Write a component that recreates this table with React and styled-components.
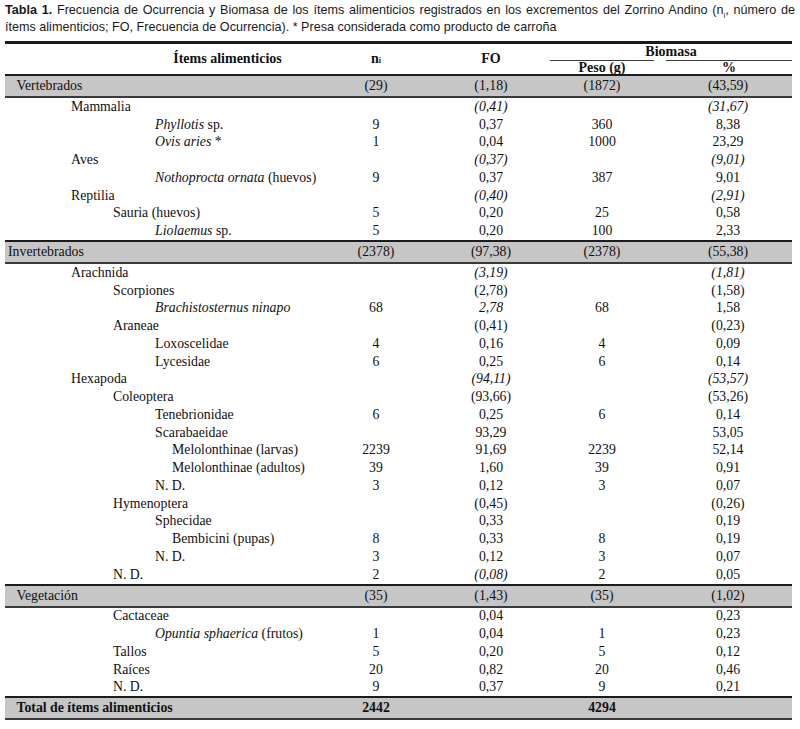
import React from 'react'
import styled, { createGlobalStyle } from 'styled-components'

const GlobalStyle = createGlobalStyle`
  body {
    margin: 0;
    background: #ffffff;
    color: #111111;
    font-family: "Liberation Serif", "Times New Roman", serif;
  }
`

const COLS = '315px 112px 118px 104px 138px'

const Page = styled.div`
  width: 800px;
  padding-left: 5px;
  box-sizing: border-box;
`

const Caption = styled.div`
  width: 790px;
  padding-top: 2px;
  margin-bottom: 5px;
  font-family: "Liberation Sans", Arial, sans-serif;
  font-size: 12.6px;
  line-height: 17px;
  color: #1a1a1a;

  b {
    font-weight: bold;
  }

  sub {
    font-size: 8px;
    line-height: 0;
  }
`

const CaptionLine = styled.div`
  white-space: nowrap;
  text-align: ${p => (p.$justify ? 'justify' : 'left')};
  text-align-last: ${p => (p.$justify ? 'justify' : 'left')};
`

const Table = styled.div`
  width: 787px;
`

const Header = styled.div`
  display: grid;
  grid-template-columns: ${COLS};
  grid-template-rows: 16px 14px;
  border-top: 3px solid #1a1a1a;
  font-weight: bold;
  font-size: 14px;
`

const HeadCell = styled.div`
  grid-row: ${p => p.$row || '1 / 3'};
  grid-column: ${p => p.$col};
  display: flex;
  align-items: center;
  justify-content: center;
  padding-left: ${p => p.$pad || 0}px;
  margin-left: ${p => p.$ml || 0}px;
  border-top: ${p => (p.$rule ? '1px solid #3a3a3a' : 'none')};
  line-height: 1;

  sub {
    font-size: 8px;
    line-height: 0;
    position: relative;
    top: 2px;
  }
`

const Row = styled.div`
  display: grid;
  grid-template-columns: ${COLS};
  align-items: center;
  height: 17.75px;
  font-size: 13.8px;
  line-height: 1;
  font-weight: ${p => (p.$bold ? 'bold' : 'normal')};
`

const Band = styled(Row)`
  height: 24px;
  box-sizing: border-box;
  background: #c6c6c6;
  border-top: 2px solid #1c1c1c;
  border-bottom: 2px solid #3a3a3a;
`

const Name = styled.div`
  padding-left: ${p => p.$indent}px;
  white-space: nowrap;
`

const Num = styled.div`
  text-align: center;
  font-style: ${p => (p.$it ? 'italic' : 'normal')};
  padding-left: ${p => (p.$last ? 10 : 0)}px;
`

const I = styled.i`
  font-style: italic;
`

const LEVEL = [9, 66, 108, 150, 167]

const rows = [
  { band: true, indent: 11.5, name: 'Vertebrados', ni: '(29)', fo: '(1,18)', peso: '(1872)', pct: '(43,59)' },
  { lv: 1, name: 'Mammalia', fo: '(0,41)', foI: true, pct: '(31,67)', pctI: true },
  { lv: 3, name: <><I>Phyllotis</I> sp.</>, ni: '9', fo: '0,37', peso: '360', pct: '8,38' },
  { lv: 3, name: <><I>Ovis aries</I> *</>, ni: '1', fo: '0,04', peso: '1000', pct: '23,29' },
  { lv: 1, name: 'Aves', fo: '(0,37)', foI: true, pct: '(9,01)', pctI: true },
  { lv: 3, name: <><I>Nothoprocta ornata</I> (huevos)</>, ni: '9', fo: '0,37', peso: '387', pct: '9,01' },
  { lv: 1, name: 'Reptilia', fo: '(0,40)', foI: true, pct: '(2,91)', pctI: true },
  { lv: 2, name: 'Sauria (huevos)', ni: '5', fo: '0,20', peso: '25', pct: '0,58' },
  { lv: 3, name: <><I>Liolaemus</I> sp.</>, ni: '5', fo: '0,20', peso: '100', pct: '2,33' },
  { band: true, indent: 3, name: 'Invertebrados', ni: '(2378)', fo: '(97,38)', peso: '(2378)', pct: '(55,38)' },
  { lv: 1, name: 'Arachnida', fo: '(3,19)', foI: true, pct: '(1,81)', pctI: true },
  { lv: 2, name: 'Scorpiones', fo: '(2,78)', pct: '(1,58)' },
  { lv: 3, name: <I>Brachistosternus ninapo</I>, ni: '68', fo: '2,78', foI: true, peso: '68', pct: '1,58' },
  { lv: 2, name: 'Araneae', fo: '(0,41)', pct: '(0,23)' },
  { lv: 3, name: 'Loxoscelidae', ni: '4', fo: '0,16', peso: '4', pct: '0,09' },
  { lv: 3, name: 'Lycesidae', ni: '6', fo: '0,25', peso: '6', pct: '0,14' },
  { lv: 1, name: 'Hexapoda', fo: '(94,11)', foI: true, pct: '(53,57)', pctI: true },
  { lv: 2, name: 'Coleoptera', fo: '(93,66)', pct: '(53,26)' },
  { lv: 3, name: 'Tenebrionidae', ni: '6', fo: '0,25', peso: '6', pct: '0,14' },
  { lv: 3, name: 'Scarabaeidae', fo: '93,29', pct: '53,05' },
  { lv: 4, name: 'Melolonthinae (larvas)', ni: '2239', fo: '91,69', peso: '2239', pct: '52,14' },
  { lv: 4, name: 'Melolonthinae (adultos)', ni: '39', fo: '1,60', peso: '39', pct: '0,91' },
  { lv: 3, name: 'N. D.', ni: '3', fo: '0,12', peso: '3', pct: '0,07' },
  { lv: 2, name: 'Hymenoptera', fo: '(0,45)', pct: '(0,26)' },
  { lv: 3, name: 'Sphecidae', fo: '0,33', pct: '0,19' },
  { lv: 4, name: 'Bembicini (pupas)', ni: '8', fo: '0,33', peso: '8', pct: '0,19' },
  { lv: 3, name: 'N. D.', ni: '3', fo: '0,12', peso: '3', pct: '0,07' },
  { lv: 2, name: 'N. D.', ni: '2', fo: '(0,08)', foI: true, peso: '2', pct: '0,05' },
  { band: true, indent: 11.5, name: 'Vegetación', ni: '(35)', fo: '(1,43)', peso: '(35)', pct: '(1,02)' },
  { lv: 2, name: 'Cactaceae', fo: '0,04', pct: '0,23' },
  { lv: 3, name: <><I>Opuntia sphaerica</I> (frutos)</>, ni: '1', fo: '0,04', peso: '1', pct: '0,23' },
  { lv: 2, name: 'Tallos', ni: '5', fo: '0,20', peso: '5', pct: '0,12' },
  { lv: 2, name: 'Raíces', ni: '20', fo: '0,82', peso: '20', pct: '0,46' },
  { lv: 2, name: 'N. D.', ni: '9', fo: '0,37', peso: '9', pct: '0,21' },
  { band: true, bold: true, indent: 11.5, name: 'Total de ítems alimenticios', ni: '2442', peso: '4294' },
]

const DataRow = ({ r }) => {
  const Wrap = r.band ? Band : Row
  const indent = r.band ? r.indent : LEVEL[r.lv]
  return (
    <Wrap $bold={r.bold}>
      <Name $indent={indent}>{r.name}</Name>
      <Num>{r.ni}</Num>
      <Num $it={r.foI}>{r.fo}</Num>
      <Num>{r.peso}</Num>
      <Num $it={r.pctI} $last>{r.pct}</Num>
    </Wrap>
  )
}

export default function App() {
  return (
    <Page>
      <GlobalStyle />
      <Caption>
        <CaptionLine $justify>
          <b>Tabla 1.</b> Frecuencia de Ocurrencia y Biomasa de los ítems alimenticios registrados en los excrementos del Zorrino Andino (n<sub>i</sub>, número de
        </CaptionLine>
        <CaptionLine>
          ítems alimenticios; FO, Frecuencia de Ocurrencia). * Presa considerada como producto de carroña
        </CaptionLine>
      </Caption>
      <Table>
        <Header>
          <HeadCell $col='1' $pad={130}>Ítems alimenticios</HeadCell>
          <HeadCell $col='2'>n<sub>i</sub></HeadCell>
          <HeadCell $col='3'>FO</HeadCell>
          <HeadCell $col='4 / 6' $row='1'>Biomasa</HeadCell>
          <HeadCell $col='4' $row='2' $rule>Peso (g)</HeadCell>
          <HeadCell $col='5' $row='2' $rule $ml={12}>%</HeadCell>
        </Header>
        {rows.map((r, i) => (
          <DataRow key={i} r={r} />
        ))}
      </Table>
    </Page>
  )
}
